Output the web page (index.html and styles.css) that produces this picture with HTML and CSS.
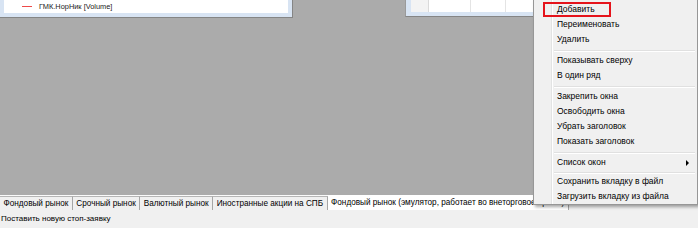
FILE: index.html
```html
<!DOCTYPE html>
<html lang="ru">
<head>
<meta charset="utf-8">
<title>Терминал</title>
<link rel="stylesheet" href="styles.css">
</head>
<body>
<div class="screen">
  <div class="workspace">
    <div class="win win-left">
      <div class="win-body legend-body">
        <div class="legend">
          <span class="legend-line"></span>
          <span class="legend-text">ГМК.НорНик [Volume]</span>
        </div>
      </div>
    </div>
    <div class="win win-right">
      <div class="win-body grid-body">
        <div class="grid-row">
          <div class="cell cell-head"></div>
          <div class="cell cell-a"></div>
          <div class="cell cell-b"></div>
          <div class="cell cell-c"></div>
        </div>
      </div>
    </div>
  </div>
  <div class="tabs">
    <div class="tab">Фондовый рынок</div>
    <div class="tab">Срочный рынок</div>
    <div class="tab">Валютный рынок</div>
    <div class="tab">Иностранные акции на СПБ</div>
    <div class="tab tab-active">Фондовый рынок (эмулятор, работает во внеторговое время)</div>
  </div>
  <div class="status">Поставить новую стоп-заявку</div>

  <div class="menu">
    <div class="menu-item">Добавить</div>
    <div class="menu-item">Переименовать</div>
    <div class="menu-item">Удалить</div>
    <div class="menu-sep"></div>
    <div class="menu-item">Показывать сверху</div>
    <div class="menu-item">В один ряд</div>
    <div class="menu-sep"></div>
    <div class="menu-item">Закрепить окна</div>
    <div class="menu-item">Освободить окна</div>
    <div class="menu-item">Убрать заголовок</div>
    <div class="menu-item">Показать заголовок</div>
    <div class="menu-sep"></div>
    <div class="menu-item menu-sub">Список окон<span class="arrow"></span></div>
    <div class="menu-sep menu-sep-short"></div>
    <div class="menu-item">Сохранить вкладку в файл</div>
    <div class="menu-item">Загрузить вкладку из файла</div>
  </div>
  <div class="annot"></div>
</div>
</body>
</html>
```
FILE: styles.css
```css
* { box-sizing: border-box; }
html, body { margin: 0; padding: 0; }
body {
  width: 698px;
  height: 228px;
  overflow: hidden;
  font-family: "Liberation Sans", Arial, sans-serif;
  font-size: 8.5px;
  color: #000;
  background: #ababab;
}
.screen {
  position: relative;
  width: 698px;
  height: 228px;
  display: flex;
  flex-direction: column;
  overflow: hidden;
}
.workspace {
  position: relative;
  height: 195px;
  background: #ababab;
  flex: none;
}
.win {
  position: absolute;
  background: #d8e4f3;
  border-right: 1px solid #858585;
  border-bottom: 1px solid #858585;
  padding: 0 4px 4px 4px;
  display: flex;
}
.win-body {
  flex: 1;
  background: #fff;
  display: flex;
  flex-direction: column;
  justify-content: flex-end;
}
.win-left {
  left: 0;
  top: -20px;
  width: 293px;
  height: 38px;
}
.legend {
  display: flex;
  align-items: center;
  height: 12px;
  margin-bottom: 1px;
  padding-left: 18px;
}
.legend-line {
  width: 10px;
  height: 1px;
  background: #ee4a4a;
  margin-right: 7px;
}
.legend-text {
  color: #222;
  font-size: 7.4px;
}
.win-right {
  left: 405px;
  top: -20px;
  width: 320px;
  height: 37px;
  border-left: 1px solid #9a9a9a;
  padding-left: 5px;
}
.grid-row {
  display: flex;
  height: 100%;
}
.cell {
  height: 100%;
  border-right: 1px solid #e4e4e4;
}
.cell-head {
  width: 18px;
  background: #f3f3f3;
  border-right-color: #dadada;
}
.cell-a { width: 42px; }
.cell-b { width: 35px; }
.cell-c { flex: 1; }

.tabs {
  flex: none;
  height: 15px;
  background: #f0f0f0;
  display: flex;
  align-items: stretch;
  border-top: 1px solid #fbfbfb;
  font-size: 8.2px;
}
.tab {
  padding: 1px 3.5px 0 3.5px;
  border-right: 1px solid #a6a6a6;
  border-top: 1px solid #b5b5b5;
  background: #f0f0f0;
  display: flex;
  align-items: center;
  white-space: nowrap;
  line-height: 1;
}
.tab-active {
  background: #fff;
  border-top-color: #fff;
  margin-top: -1px;
  padding-right: 4px;
}
.status {
  flex: 1;
  background: #f0f0f0;
  padding-left: 1px;
  display: flex;
  align-items: center;
  line-height: 1;
  font-size: 8px;
}

.menu {
  position: absolute;
  left: 533px;
  top: -1px;
  width: 165px;
  padding: 2px 2px 0 2px;
  background: #f0f0f0 linear-gradient(to right, #f0f0f0 0, #f0f0f0 17px, #e2e3e3 17px, #e2e3e3 18px, #ffffff 18px, #ffffff 19px, #f0f0f0 19px);
  border: 1px solid #979797;
  box-shadow: 2px 2px 3px rgba(0, 0, 0, 0.35);
}
.menu-item {
  height: 15px;
  line-height: 15px;
  padding-left: 21px;
  white-space: nowrap;
  position: relative;
}
.menu-sep {
  height: 6px;
  margin-left: 18px;
  padding-top: 3px;
}
.menu-sep::before {
  content: "";
  display: block;
  height: 1px;
  background: #e0e0e0;
  border-bottom: 1px solid #fff;
  box-sizing: content-box;
}
.menu-sep-short { height: 4px; padding-top: 2px; }
.menu-sub { display: flex; align-items: center; }
.arrow {
  margin-left: auto;
  margin-right: 6px;
  width: 0;
  height: 0;
  border-top: 3px solid transparent;
  border-bottom: 3px solid transparent;
  border-left: 3px solid #000;
}
.annot {
  position: absolute;
  left: 543px;
  top: 2px;
  width: 68px;
  height: 15px;
  border: 2px solid #e5131b;
}
```
